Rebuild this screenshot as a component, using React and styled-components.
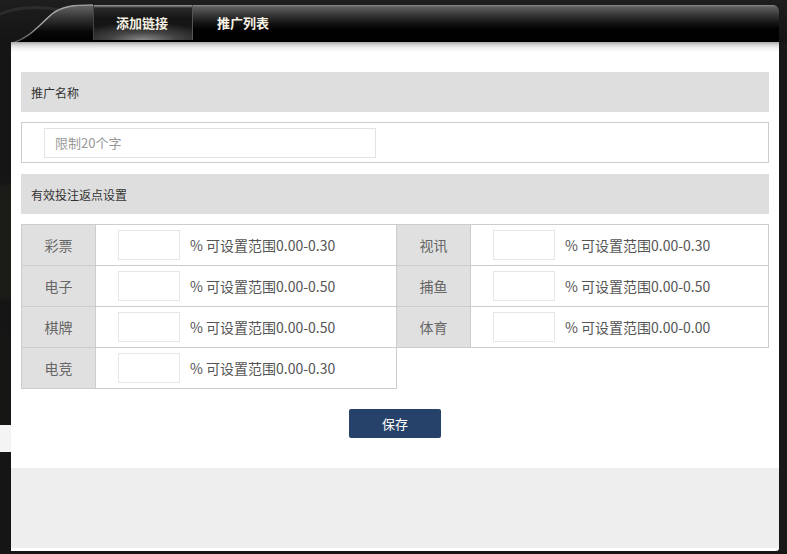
import styled, { createGlobalStyle } from "styled-components";

const GlobalStyle = createGlobalStyle`
  html, body {
    margin: 0;
    padding: 0;
    background: #161616;
  }
  body {
    font-family: "Noto Sans CJK SC", "Noto Sans", sans-serif;
  }
  * {
    box-sizing: border-box;
  }
`;

const rates = [
  { label: "彩票", range: "0.00-0.30" },
  { label: "视讯", range: "0.00-0.30" },
  { label: "电子", range: "0.00-0.50" },
  { label: "捕鱼", range: "0.00-0.50" },
  { label: "棋牌", range: "0.00-0.50" },
  { label: "体育", range: "0.00-0.00" },
  { label: "电竞", range: "0.00-0.30" },
];

function Wing() {
  return (
    <svg width="93" height="42" viewBox="0 0 93 42">
      <defs>
        <linearGradient id="wingFill" x1="0" y1="0" x2="0" y2="1">
          <stop offset="0" stopColor="#666" />
          <stop offset="0.35" stopColor="#333" />
          <stop offset="0.7" stopColor="#080808" />
          <stop offset="1" stopColor="#000" />
        </linearGradient>
        <linearGradient id="wingEdge" x1="0" y1="1" x2="1" y2="0">
          <stop offset="0" stopColor="#555" />
          <stop offset="0.5" stopColor="#b5b5b5" />
          <stop offset="1" stopColor="#999" />
        </linearGradient>
      </defs>
      <path d="M0 14 C 20 6, 40 6, 60 10" stroke="#2c2c2c" strokeWidth="3" fill="none" />
      <path
        d="M12 43 C 30 38, 40 24, 52 14 C 62 6, 74 5, 93 5 L 93 43 Z"
        fill="url(#wingFill)"
      />
      <path
        d="M12 43 C 30 38, 40 24, 52 14 C 62 6, 74 5, 93 5"
        stroke="url(#wingEdge)"
        strokeWidth="1.3"
        fill="none"
      />
    </svg>
  );
}

export default function App() {
  return (
    <>
      <GlobalStyle />
      <Page>
        <Header>
          <Wing />
          <Bar>
            <Tab $active>添加链接</Tab>
            <Tab>推广列表</Tab>
          </Bar>
        </Header>
        <Body>
          <LeftGutter />
          <Panel>
            <Content>
              <SectionHead>推广名称</SectionHead>
              <InputBox>
                <NameInput placeholder="限制20个字" />
              </InputBox>
              <SectionHead>有效投注返点设置</SectionHead>
              <RateGrid>
                {rates.map((r) => (
                  <RateItem key={r.label}>
                    <RateLabel>{r.label}</RateLabel>
                    <RateValue>
                      <RateInput />
                      <RateHint>% 可设置范围{r.range}</RateHint>
                    </RateValue>
                  </RateItem>
                ))}
              </RateGrid>
              <Actions>
                <SaveButton>保存</SaveButton>
              </Actions>
            </Content>
            <Footer />
          </Panel>
          <RightGutter />
        </Body>
      </Page>
    </>
  );
}

const Page = styled.div`
  width: 787px;
  height: 554px;
  overflow: hidden;
  background: #161616;
`;

const Header = styled.div`
  display: flex;
  height: 42px;
  padding-right: 8px;
  background: linear-gradient(to bottom, #1e1e1e, #141414);
`;

const Bar = styled.div`
  flex: 1;
  display: flex;
  margin-top: 5px;
  height: 37px;
  border-top-right-radius: 6px;
  background: linear-gradient(
    to bottom,
    #8c8c8c 0,
    #5e5e5e 2px,
    #3c3c3c 9px,
    #181818 17px,
    #020202 24px,
    #000 100%
  );
`;

const Tab = styled.div`
  height: 35px;
  display: flex;
  align-items: center;
  padding: ${(p) => (p.$active ? "0 0 0 22px" : "0 0 0 24px")};
  width: ${(p) => (p.$active ? "100px" : "auto")};
  font-size: 13px;
  font-weight: bold;
  color: #f6f1e3;
  border-right: ${(p) => (p.$active ? "1px solid #555" : "none")};
  border-left: ${(p) => (p.$active ? "1px solid #444" : "none")};
  background: ${(p) =>
    p.$active
      ? "radial-gradient(ellipse 75% 50% at 50% 100%, #8a8a8a 0%, #444 45%, transparent 100%), linear-gradient(to bottom, #a0a0a0 0, #2a2a2a 3px, #141414 40%, #1a1a1a 100%)"
      : "transparent"};
`;

const Body = styled.div`
  display: flex;
  height: 509px;
`;

const LeftGutter = styled.div`
  width: 11px;
  background: linear-gradient(
    to bottom,
    #151515 0,
    #151515 140px,
    #1b1b18 145px,
    #1b1b18 255px,
    #151515 260px,
    #161614 383px,
    #f4f4f4 383px,
    #f4f4f4 410px,
    #151515 410px,
    #151515 100%
  );
`;

const RightGutter = styled.div`
  width: 8px;
  background: #181818;
`;

const Panel = styled.div`
  flex: 1;
  display: flex;
  flex-direction: column;
  border-bottom-right-radius: 3px;
  overflow: hidden;
  background: linear-gradient(to bottom, #a8a8a8 0, #d8d8d8 3px, #f0f0f0 6px, #fff 10px, #fff 100%);
`;

const Content = styled.div`
  padding: 30px 10px 30px 10px;
`;

const SectionHead = styled.div`
  height: 40px;
  display: flex;
  align-items: center;
  padding-left: 10px;
  margin-bottom: 10px;
  background: #dedede;
  font-size: 12px;
  color: #333;
`;

const InputBox = styled.div`
  height: 41px;
  display: flex;
  align-items: center;
  padding-left: 22px;
  margin-bottom: 11px;
  border: 1px solid #cccccc;
  background: #fff;
`;

const NameInput = styled.input`
  width: 332px;
  height: 30px;
  padding: 0 10px;
  border: 1px solid #e3e3e3;
  outline: none;
  font-family: inherit;
  font-size: 13px;
  color: #333;
  &::placeholder {
    color: #999;
  }
`;

const RateGrid = styled.div`
  display: grid;
  grid-template-columns: 375px 372px;
  padding: 1px 0 0 1px;
`;

const RateItem = styled.div`
  display: flex;
  height: 42px;
  margin: -1px 0 0 -1px;
  border: 1px solid #cccccc;
`;

const RateLabel = styled.div`
  width: 74px;
  display: flex;
  align-items: center;
  justify-content: center;
  background: #e0e0e0;
  border-right: 1px solid #cccccc;
  font-size: 14px;
  color: #666;
`;

const RateValue = styled.div`
  flex: 1;
  display: flex;
  align-items: center;
  padding-left: 22px;
`;

const RateInput = styled.input`
  width: 62px;
  height: 30px;
  margin-right: 10px;
  border: 1px solid #e6e6e6;
  outline: none;
`;

const RateHint = styled.span`
  font-size: 14px;
  color: #555;
  white-space: nowrap;
`;

const Actions = styled.div`
  display: flex;
  justify-content: center;
  margin-top: 20px;
`;

const SaveButton = styled.button`
  width: 92px;
  height: 29px;
  border: none;
  border-radius: 2px;
  background: #27426a;
  color: #fff;
  font-family: inherit;
  font-size: 13px;
  cursor: pointer;
`;

const Footer = styled.div`
  flex: 1;
  background: #eeeeee;
  margin-bottom: 3px;
`;
